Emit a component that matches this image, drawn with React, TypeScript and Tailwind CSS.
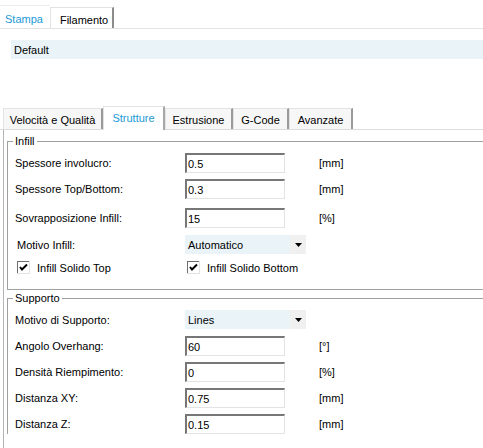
import React from "react";

const font = { fontFamily: '"Liberation Sans", Arial, sans-serif' };

const TopTab = ({ label, active }: { label: string; active?: boolean }) =>
  active ? (
    <div className="h-[23px] pl-[5px] pr-[7px] pt-[6px] border-t border-[#ececec] bg-white text-[#1a9ad6]">
      {label}
    </div>
  ) : (
    <div className="h-[21px] pl-[9px] pr-[4px] pt-[5px] border-t border-l border-[#e3e3e3] border-r-2 border-r-[#8c8c8c] bg-white text-black">
      {label}
    </div>
  );

const SubTab = ({ label, active, w }: { label: string; active?: boolean; w: string }) =>
  active ? (
    <div
      className={`${w} h-[24px] pt-[4px] text-center border-t border-l border-[#e3e3e3] border-r-2 border-r-[#a8a8a8] bg-white text-[#1a9ad6] -mb-px`}
    >
      {label}
    </div>
  ) : (
    <div
      className={`${w} h-[21px] pt-[4px] text-center border-t border-l border-[#e3e3e3] border-r-2 border-r-[#9a9a9a] bg-[#f7f7f7] text-black`}
    >
      {label}
    </div>
  );

const Field = ({ label, value, unit, mt }: { label: string; value: string; unit: string; mt: string }) => (
  <div className={`flex items-center h-[20px] ${mt}`}>
    <div className="w-[177px] pl-[7px]">{label}</div>
    <div className="w-[100px] h-[20px] pl-[1px] pt-[2px] border-t-2 border-l-2 border-t-[#777] border-l-[#777] border-r border-b border-r-[#e3e3e3] border-b-[#e3e3e3] bg-white leading-[14px]">
      {value}
    </div>
    <div className="ml-[34px]">{unit}</div>
  </div>
);

const Select = ({ value }: { value: string }) => (
  <div className="flex w-[121px] h-[19px]">
    <div className="flex-1 bg-[#eaf4f8] pl-[3px] pt-[3px] leading-[14px]">{value}</div>
    <div className="w-[16px] bg-[#f0f0f0] flex items-center justify-center">
      <svg width="7" height="4" viewBox="0 0 7 4">
        <path d="M0 0 H7 L3.5 4 Z" fill="#000" />
      </svg>
    </div>
  </div>
);

const Check = ({ label }: { label: string }) => (
  <div className="flex items-center">
    <svg width="13" height="13" viewBox="0 0 13 13">
      <rect x="0" y="0" width="13" height="13" fill="#e3e3e3" />
      <rect x="0" y="0" width="12" height="12" fill="#6e6e6e" />
      <rect x="1" y="1" width="11" height="11" fill="#fff" />
      <path d="M3 6 L5 8.5 L10 3.5" stroke="#000" strokeWidth="2" fill="none" />
    </svg>
    <span className="ml-[7px]">{label}</span>
  </div>
);

export default function App() {
  return (
    <div className="w-[483px] h-[448px] overflow-hidden bg-white text-[11px] leading-[14px] text-black" style={font}>
      {/* top tabs */}
      <div className="flex items-end h-[29px] border-b border-[#e3e3e3]">
        <TopTab label="Stampa" active />
        <TopTab label="Filamento" />
      </div>

      <div className="ml-[11px] mt-[11px] h-[19px] bg-[#eaf4f8] pl-[3px] pt-[3px]">Default</div>

      {/* sub tabs */}
      <div className="mt-[47px] flex items-end h-[24px] pl-[3px] border-b border-[#dcdcdc]">
        <SubTab label="Velocità e Qualità" w="w-[100px]" />
        <SubTab label="Strutture" active w="w-[62px]" />
        <SubTab label="Estrusione" w="w-[68px]" />
        <SubTab label="G-Code" w="w-[56px]" />
        <SubTab label="Avanzate" w="w-[64px]" />
      </div>

      <div className="ml-[3px] border-l border-[#b4b4b4] pl-[3px] pt-[4px] h-[400px]">
        <fieldset className="border-t border-l border-b border-[#a0a0a0] pb-[15px]">
          <legend className="ml-[5px] px-[2px]">Infill</legend>
          <Field label="Spessore involucro:" value="0.5" unit="[mm]" mt="mt-[5px]" />
          <Field label="Spessore Top/Bottom:" value="0.3" unit="[mm]" mt="mt-[6px]" />
          <Field label="Sovrapposizione Infill:" value="15" unit="[%]" mt="mt-[9px]" />
          <div className="flex items-center h-[19px] mt-[7px]">
            <div className="w-[177px] pl-[9px]">Motivo Infill:</div>
            <Select value="Automatico" />
          </div>
          <div className="flex items-center h-[13px] mt-[7px]">
            <div className="w-[179px] pl-[9px]">
              <Check label="Infill Solido Top" />
            </div>
            <div>
              <Check label="Infill Solido Bottom" />
            </div>
          </div>
        </fieldset>

        <fieldset className="mt-[1px] border-t border-l border-[#a0a0a0]">
          <legend className="ml-[5px] px-[2px]">Supporto</legend>
          <div className="flex items-center h-[19px] mt-[5px]">
            <div className="w-[177px] pl-[7px]">Motivo di Supporto:</div>
            <Select value="Lines" />
          </div>
          <Field label="Angolo Overhang:" value="60" unit="[°]" mt="mt-[7px]" />
          <Field label="Densità Riempimento:" value="0" unit="[%]" mt="mt-[6px]" />
          <Field label="Distanza XY:" value="0.75" unit="[mm]" mt="mt-[6px]" />
          <Field label="Distanza Z:" value="0.15" unit="[mm]" mt="mt-[6px]" />
        </fieldset>
      </div>
    </div>
  );
}
